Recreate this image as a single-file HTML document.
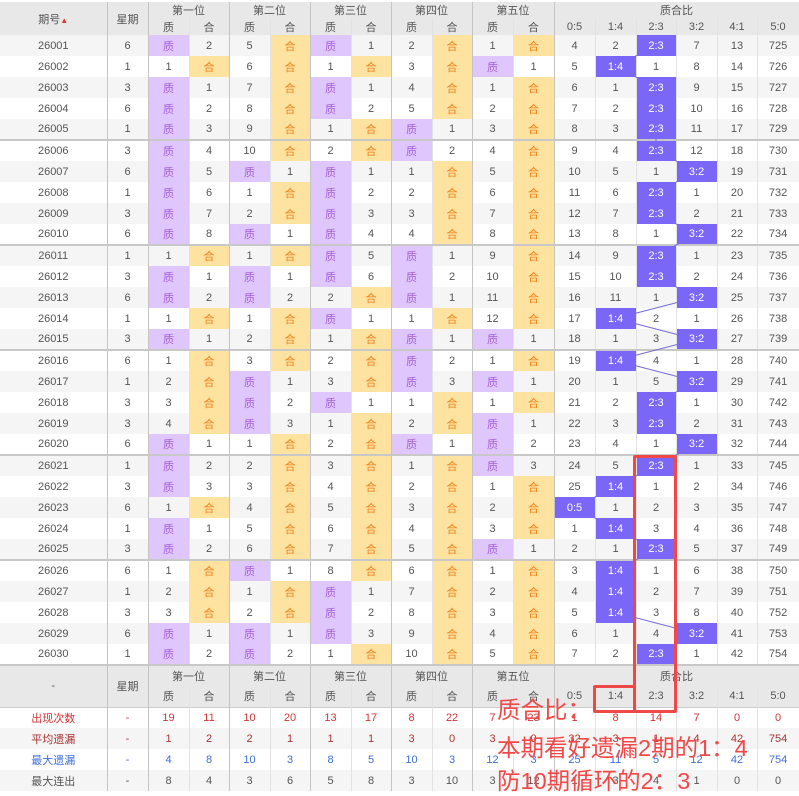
<!DOCTYPE html>
<html><head><meta charset="utf-8"><style>
*{margin:0;padding:0;box-sizing:border-box}
body{width:799px;height:793px;background:#fff;position:relative;overflow:hidden;font-family:"Liberation Sans","Noto Sans CJK SC",sans-serif;font-size:11px;color:#555}
table{position:absolute;left:0;top:2px;border-collapse:collapse;table-layout:fixed;width:799px}
td{text-align:center;padding:0;height:21px;border-right:1px solid #e2e2e2;white-space:nowrap;overflow:hidden}
tr.g td{border-top:2px solid #c8c8c8}
tr:nth-child(odd).d td{background:#f5f5f5}
tr.d td.z{background:#dfc6fc;color:#a561d8}
tr.d td.h{background:#fde2a0;color:#f08018}
tr.d td.b{background:#7a67f8;color:#fff;position:relative;z-index:2}
.s{border-right:1px solid #c4c4c4}
.hd td{background:#e8e8e8;height:16px;color:#555;font-size:11px}
.hd2 td{background:#e8e8e8;height:17px}
.f td{height:21px}
.r1 td{color:#d03535}.r2 td{color:#a33}.r3 td{color:#3d6fd8}.r4 td{color:#555}
.box{position:absolute;border:3px solid #f04848;border-radius:2px;z-index:3}
.ann{position:absolute;left:497px;color:#f24848;font-size:23.5px;font-family:"Liberation Sans","Noto Sans CJK SC",sans-serif;white-space:nowrap;z-index:3}
</style></head><body>
<table>
<colgroup><col style="width:107px"><col style="width:41px"><col style="width:41px"><col style="width:40px"><col style="width:41px"><col style="width:40px"><col style="width:41px"><col style="width:40px"><col style="width:41px"><col style="width:40px"><col style="width:41px"><col style="width:41px"><col style="width:41px"><col style="width:41px"><col style="width:40px"><col style="width:41px"><col style="width:40px"><col style="width:42px"></colgroup>
<tr class="hd"><td rowspan="2" class="s" style="height:33px">期号<span style="color:#d33;font-size:8px">▲</span></td><td rowspan="2" class="s">星期</td><td colspan="2" class="s">第一位</td><td colspan="2" class="s">第二位</td><td colspan="2" class="s">第三位</td><td colspan="2" class="s">第四位</td><td colspan="2" class="s">第五位</td><td colspan="6">质合比</td></tr>
<tr class="hd2"><td>质</td><td class="s">合</td><td>质</td><td class="s">合</td><td>质</td><td class="s">合</td><td>质</td><td class="s">合</td><td>质</td><td class="s">合</td><td>0:5</td><td>1:4</td><td>2:3</td><td>3:2</td><td>4:1</td><td>5:0</td></tr>
<tr class="d"><td class="s">26001</td><td class="s">6</td><td class="z">质</td><td class="s">2</td><td>5</td><td class="h s">合</td><td class="z">质</td><td class="s">1</td><td>2</td><td class="h s">合</td><td>1</td><td class="h s">合</td><td>4</td><td>2</td><td class="b">2:3</td><td>7</td><td>13</td><td>725</td></tr>
<tr class="d"><td class="s">26002</td><td class="s">1</td><td>1</td><td class="h s">合</td><td>6</td><td class="h s">合</td><td>1</td><td class="h s">合</td><td>3</td><td class="h s">合</td><td class="z">质</td><td class="s">1</td><td>5</td><td class="b">1:4</td><td>1</td><td>8</td><td>14</td><td>726</td></tr>
<tr class="d"><td class="s">26003</td><td class="s">3</td><td class="z">质</td><td class="s">1</td><td>7</td><td class="h s">合</td><td class="z">质</td><td class="s">1</td><td>4</td><td class="h s">合</td><td>1</td><td class="h s">合</td><td>6</td><td>1</td><td class="b">2:3</td><td>9</td><td>15</td><td>727</td></tr>
<tr class="d"><td class="s">26004</td><td class="s">6</td><td class="z">质</td><td class="s">2</td><td>8</td><td class="h s">合</td><td class="z">质</td><td class="s">2</td><td>5</td><td class="h s">合</td><td>2</td><td class="h s">合</td><td>7</td><td>2</td><td class="b">2:3</td><td>10</td><td>16</td><td>728</td></tr>
<tr class="d"><td class="s">26005</td><td class="s">1</td><td class="z">质</td><td class="s">3</td><td>9</td><td class="h s">合</td><td>1</td><td class="h s">合</td><td class="z">质</td><td class="s">1</td><td>3</td><td class="h s">合</td><td>8</td><td>3</td><td class="b">2:3</td><td>11</td><td>17</td><td>729</td></tr>
<tr class="d g"><td class="s">26006</td><td class="s">3</td><td class="z">质</td><td class="s">4</td><td>10</td><td class="h s">合</td><td>2</td><td class="h s">合</td><td class="z">质</td><td class="s">2</td><td>4</td><td class="h s">合</td><td>9</td><td>4</td><td class="b">2:3</td><td>12</td><td>18</td><td>730</td></tr>
<tr class="d"><td class="s">26007</td><td class="s">6</td><td class="z">质</td><td class="s">5</td><td class="z">质</td><td class="s">1</td><td class="z">质</td><td class="s">1</td><td>1</td><td class="h s">合</td><td>5</td><td class="h s">合</td><td>10</td><td>5</td><td>1</td><td class="b">3:2</td><td>19</td><td>731</td></tr>
<tr class="d"><td class="s">26008</td><td class="s">1</td><td class="z">质</td><td class="s">6</td><td>1</td><td class="h s">合</td><td class="z">质</td><td class="s">2</td><td>2</td><td class="h s">合</td><td>6</td><td class="h s">合</td><td>11</td><td>6</td><td class="b">2:3</td><td>1</td><td>20</td><td>732</td></tr>
<tr class="d"><td class="s">26009</td><td class="s">3</td><td class="z">质</td><td class="s">7</td><td>2</td><td class="h s">合</td><td class="z">质</td><td class="s">3</td><td>3</td><td class="h s">合</td><td>7</td><td class="h s">合</td><td>12</td><td>7</td><td class="b">2:3</td><td>2</td><td>21</td><td>733</td></tr>
<tr class="d"><td class="s">26010</td><td class="s">6</td><td class="z">质</td><td class="s">8</td><td class="z">质</td><td class="s">1</td><td class="z">质</td><td class="s">4</td><td>4</td><td class="h s">合</td><td>8</td><td class="h s">合</td><td>13</td><td>8</td><td>1</td><td class="b">3:2</td><td>22</td><td>734</td></tr>
<tr class="d g"><td class="s">26011</td><td class="s">1</td><td>1</td><td class="h s">合</td><td>1</td><td class="h s">合</td><td class="z">质</td><td class="s">5</td><td class="z">质</td><td class="s">1</td><td>9</td><td class="h s">合</td><td>14</td><td>9</td><td class="b">2:3</td><td>1</td><td>23</td><td>735</td></tr>
<tr class="d"><td class="s">26012</td><td class="s">3</td><td class="z">质</td><td class="s">1</td><td class="z">质</td><td class="s">1</td><td class="z">质</td><td class="s">6</td><td class="z">质</td><td class="s">2</td><td>10</td><td class="h s">合</td><td>15</td><td>10</td><td class="b">2:3</td><td>2</td><td>24</td><td>736</td></tr>
<tr class="d"><td class="s">26013</td><td class="s">6</td><td class="z">质</td><td class="s">2</td><td class="z">质</td><td class="s">2</td><td>2</td><td class="h s">合</td><td class="z">质</td><td class="s">1</td><td>11</td><td class="h s">合</td><td>16</td><td>11</td><td>1</td><td class="b">3:2</td><td>25</td><td>737</td></tr>
<tr class="d"><td class="s">26014</td><td class="s">1</td><td>1</td><td class="h s">合</td><td>1</td><td class="h s">合</td><td class="z">质</td><td class="s">1</td><td>1</td><td class="h s">合</td><td>12</td><td class="h s">合</td><td>17</td><td class="b">1:4</td><td>2</td><td>1</td><td>26</td><td>738</td></tr>
<tr class="d"><td class="s">26015</td><td class="s">3</td><td class="z">质</td><td class="s">1</td><td>2</td><td class="h s">合</td><td>1</td><td class="h s">合</td><td class="z">质</td><td class="s">1</td><td class="z">质</td><td class="s">1</td><td>18</td><td>1</td><td>3</td><td class="b">3:2</td><td>27</td><td>739</td></tr>
<tr class="d g"><td class="s">26016</td><td class="s">6</td><td>1</td><td class="h s">合</td><td>3</td><td class="h s">合</td><td>2</td><td class="h s">合</td><td class="z">质</td><td class="s">2</td><td>1</td><td class="h s">合</td><td>19</td><td class="b">1:4</td><td>4</td><td>1</td><td>28</td><td>740</td></tr>
<tr class="d"><td class="s">26017</td><td class="s">1</td><td>2</td><td class="h s">合</td><td class="z">质</td><td class="s">1</td><td>3</td><td class="h s">合</td><td class="z">质</td><td class="s">3</td><td class="z">质</td><td class="s">1</td><td>20</td><td>1</td><td>5</td><td class="b">3:2</td><td>29</td><td>741</td></tr>
<tr class="d"><td class="s">26018</td><td class="s">3</td><td>3</td><td class="h s">合</td><td class="z">质</td><td class="s">2</td><td class="z">质</td><td class="s">1</td><td>1</td><td class="h s">合</td><td>1</td><td class="h s">合</td><td>21</td><td>2</td><td class="b">2:3</td><td>1</td><td>30</td><td>742</td></tr>
<tr class="d"><td class="s">26019</td><td class="s">3</td><td>4</td><td class="h s">合</td><td class="z">质</td><td class="s">3</td><td>1</td><td class="h s">合</td><td>2</td><td class="h s">合</td><td class="z">质</td><td class="s">1</td><td>22</td><td>3</td><td class="b">2:3</td><td>2</td><td>31</td><td>743</td></tr>
<tr class="d"><td class="s">26020</td><td class="s">6</td><td class="z">质</td><td class="s">1</td><td>1</td><td class="h s">合</td><td>2</td><td class="h s">合</td><td class="z">质</td><td class="s">1</td><td class="z">质</td><td class="s">2</td><td>23</td><td>4</td><td>1</td><td class="b">3:2</td><td>32</td><td>744</td></tr>
<tr class="d g"><td class="s">26021</td><td class="s">1</td><td class="z">质</td><td class="s">2</td><td>2</td><td class="h s">合</td><td>3</td><td class="h s">合</td><td>1</td><td class="h s">合</td><td class="z">质</td><td class="s">3</td><td>24</td><td>5</td><td class="b">2:3</td><td>1</td><td>33</td><td>745</td></tr>
<tr class="d"><td class="s">26022</td><td class="s">3</td><td class="z">质</td><td class="s">3</td><td>3</td><td class="h s">合</td><td>4</td><td class="h s">合</td><td>2</td><td class="h s">合</td><td>1</td><td class="h s">合</td><td>25</td><td class="b">1:4</td><td>1</td><td>2</td><td>34</td><td>746</td></tr>
<tr class="d"><td class="s">26023</td><td class="s">6</td><td>1</td><td class="h s">合</td><td>4</td><td class="h s">合</td><td>5</td><td class="h s">合</td><td>3</td><td class="h s">合</td><td>2</td><td class="h s">合</td><td class="b">0:5</td><td>1</td><td>2</td><td>3</td><td>35</td><td>747</td></tr>
<tr class="d"><td class="s">26024</td><td class="s">1</td><td class="z">质</td><td class="s">1</td><td>5</td><td class="h s">合</td><td>6</td><td class="h s">合</td><td>4</td><td class="h s">合</td><td>3</td><td class="h s">合</td><td>1</td><td class="b">1:4</td><td>3</td><td>4</td><td>36</td><td>748</td></tr>
<tr class="d"><td class="s">26025</td><td class="s">3</td><td class="z">质</td><td class="s">2</td><td>6</td><td class="h s">合</td><td>7</td><td class="h s">合</td><td>5</td><td class="h s">合</td><td class="z">质</td><td class="s">1</td><td>2</td><td>1</td><td class="b">2:3</td><td>5</td><td>37</td><td>749</td></tr>
<tr class="d g"><td class="s">26026</td><td class="s">6</td><td>1</td><td class="h s">合</td><td class="z">质</td><td class="s">1</td><td>8</td><td class="h s">合</td><td>6</td><td class="h s">合</td><td>1</td><td class="h s">合</td><td>3</td><td class="b">1:4</td><td>1</td><td>6</td><td>38</td><td>750</td></tr>
<tr class="d"><td class="s">26027</td><td class="s">1</td><td>2</td><td class="h s">合</td><td>1</td><td class="h s">合</td><td class="z">质</td><td class="s">1</td><td>7</td><td class="h s">合</td><td>2</td><td class="h s">合</td><td>4</td><td class="b">1:4</td><td>2</td><td>7</td><td>39</td><td>751</td></tr>
<tr class="d"><td class="s">26028</td><td class="s">3</td><td>3</td><td class="h s">合</td><td>2</td><td class="h s">合</td><td class="z">质</td><td class="s">2</td><td>8</td><td class="h s">合</td><td>3</td><td class="h s">合</td><td>5</td><td class="b">1:4</td><td>3</td><td>8</td><td>40</td><td>752</td></tr>
<tr class="d"><td class="s">26029</td><td class="s">6</td><td class="z">质</td><td class="s">1</td><td class="z">质</td><td class="s">1</td><td class="z">质</td><td class="s">3</td><td>9</td><td class="h s">合</td><td>4</td><td class="h s">合</td><td>6</td><td>1</td><td>4</td><td class="b">3:2</td><td>41</td><td>753</td></tr>
<tr class="d"><td class="s">26030</td><td class="s">1</td><td class="z">质</td><td class="s">2</td><td class="z">质</td><td class="s">2</td><td>1</td><td class="h s">合</td><td>10</td><td class="h s">合</td><td>5</td><td class="h s">合</td><td>7</td><td>2</td><td class="b">2:3</td><td>1</td><td>42</td><td>754</td></tr>
<tr class="hd g"><td rowspan="2" class="s" style="height:42px">-</td><td rowspan="2" class="s">星期</td><td colspan="2" class="s" style="height:21px">第一位</td><td colspan="2" class="s">第二位</td><td colspan="2" class="s">第三位</td><td colspan="2" class="s">第四位</td><td colspan="2" class="s">第五位</td><td colspan="6">质合比</td></tr>
<tr class="hd2"><td style="height:21px">质</td><td class="s">合</td><td>质</td><td class="s">合</td><td>质</td><td class="s">合</td><td>质</td><td class="s">合</td><td>质</td><td class="s">合</td><td>0:5</td><td>1:4</td><td>2:3</td><td>3:2</td><td>4:1</td><td>5:0</td></tr>
<tr class="f r1" style="border-top:1px solid #ccc"><td class="s">出现次数</td><td class="s">-</td><td>19</td><td class="s">11</td><td>10</td><td class="s">20</td><td>13</td><td class="s">17</td><td>8</td><td class="s">22</td><td>7</td><td class="s">23</td><td>1</td><td>8</td><td>14</td><td>7</td><td>0</td><td>0</td></tr>
<tr class="f r2" style="background:#f5f5f5"><td class="s">平均遗漏</td><td class="s">-</td><td>1</td><td class="s">2</td><td>2</td><td class="s">1</td><td>1</td><td class="s">1</td><td>3</td><td class="s">0</td><td>3</td><td class="s">0</td><td>32</td><td>3</td><td>1</td><td>4</td><td>42</td><td>754</td></tr>
<tr class="f r3"><td class="s">最大遗漏</td><td class="s">-</td><td>4</td><td class="s">8</td><td>10</td><td class="s">3</td><td>8</td><td class="s">5</td><td>10</td><td class="s">3</td><td>12</td><td class="s">3</td><td>25</td><td>11</td><td>5</td><td>12</td><td>42</td><td>754</td></tr>
<tr class="f r4" style="background:#f5f5f5"><td class="s">最大连出</td><td class="s">-</td><td>8</td><td class="s">4</td><td>3</td><td class="s">6</td><td>5</td><td class="s">8</td><td>3</td><td class="s">10</td><td>3</td><td class="s">12</td><td>1</td><td>3</td><td>4</td><td>1</td><td>0</td><td>0</td></tr>
</table>
<svg style="position:absolute;left:0;top:0;z-index:1" width="799" height="793"><polyline fill="none" stroke="#7a70d8" stroke-width="1" points="656,45.5 615.5,66.5 656,87.5 656,108.5 656,129.5 656,150.5 696.5,171.5 656,192.5 656,213.5 696.5,234.5 656,255.5 656,276.5 696.5,297.5 615.5,318.5 696.5,339.5 615.5,360.5 696.5,381.5 656,402.5 656,423.5 696.5,444.5 656,465.5 615.5,486.5 574.5,507.5 615.5,528.5 656,549.5 615.5,570.5 615.5,591.5 615.5,612.5 696.5,633.5 656,654.5"/></svg>
<div class="box" style="left:633px;top:455px;width:44px;height:258px"></div>
<div class="box" style="left:593px;top:685px;width:43px;height:28px"></div>
<div class="ann" style="top:691px">质合比：</div>
<div class="ann" style="top:729px">本期看好遗漏2期的1：4</div>
<div class="ann" style="top:762px">防10期循环的2：3</div>
</body></html>
